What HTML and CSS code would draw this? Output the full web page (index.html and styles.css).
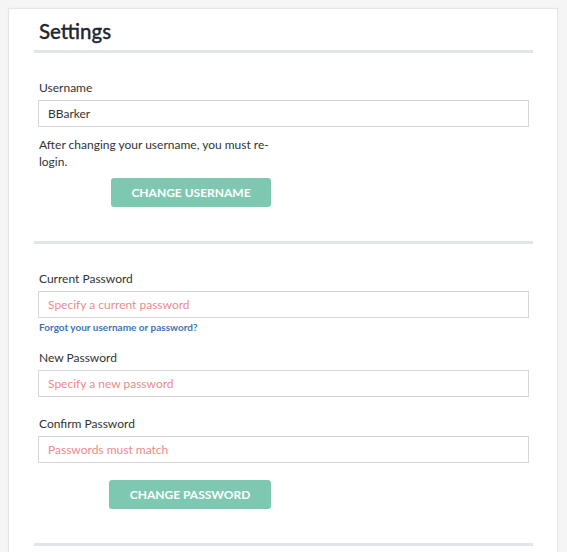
FILE: index.html
```html
<!DOCTYPE html>
<html lang="en">
<head>
<meta charset="utf-8">
<title>Settings</title>
<link rel="stylesheet" href="styles.css">
</head>
<body>
<div class="card">
  <h1 class="title">Settings</h1>
  <hr class="rule">
  <section class="section">
    <label class="label" for="username">Username</label>
    <input class="field" id="username" type="text" value="BBarker">
    <p class="help">After changing your username, you must re-login.</p>
    <button class="btn btn-username" type="button">Change Username</button>
  </section>
  <hr class="rule rule-gap">
  <section class="section">
    <label class="label" for="current">Current Password</label>
    <input class="field" id="current" type="password" placeholder="Specify a current password">
    <a class="forgot" href="#">Forgot your username or password?</a>
    <label class="label label-next" for="newpw">New Password</label>
    <input class="field" id="newpw" type="password" placeholder="Specify a new password">
    <label class="label label-far" for="confirm">Confirm Password</label>
    <input class="field" id="confirm" type="password" placeholder="Passwords must match">
    <button class="btn btn-password" type="button">Change Password</button>
  </section>
  <hr class="rule rule-gap">
</div>
</body>
</html>
```
FILE: styles.css
```css
html, body {
  margin: 0;
  padding: 0;
}
body {
  background: #f5f5f5;
  font-family: Lato, "Open Sans", "Liberation Sans", sans-serif;
  color: #333;
  height: 552px;
  overflow: hidden;
}
.card {
  margin: 8px 0 0 8px;
  width: 499px;
  padding: 9px 24px 40px 25px;
  background: #fff;
  border: 1px solid #e4e6e8;
  box-shadow: 0 0 2px rgba(0,0,0,0.04);
}
.title {
  margin: 0 0 6px 0;
  padding-left: 5px;
  font-size: 20.5px;
  line-height: 26px;
  font-weight: 500;
  color: #23262c;
  -webkit-text-stroke: 0.3px #23262c;
}
.rule {
  margin: 0;
  border: 0;
  height: 3px;
  background: #e1e5e9;
}
.rule-gap {
  margin-top: 34px;
}
.section {
  display: flex;
  flex-direction: column;
  align-items: flex-start;
  padding: 25px 4px 0 4px;
}
.label {
  display: block;
  padding: 2px 0 0 1px;
  font-size: 12px;
  line-height: 16px;
  color: #333;
}
.label-next {
  margin-top: 14px;
}
.label-far {
  margin-top: 17px;
}
.field {
  box-sizing: border-box;
  width: 491px;
  height: 27px;
  margin: 4px 0 0 0;
  padding: 0 9px;
  border: 1px solid #d6d6d6;
  border-radius: 0;
  background: #fff;
  font-family: Lato, "Open Sans", "Liberation Sans", sans-serif;
  font-size: 12px;
  color: #333;
  outline: none;
}
.field::placeholder {
  color: #f08a8a;
  opacity: 1;
}
.help {
  width: 245px;
  margin: 9px 0 0 0;
  padding-left: 1px;
  font-size: 12px;
  line-height: 17px;
  color: #333;
}
.btn {
  box-sizing: border-box;
  height: 29px;
  margin-top: 8px;
  border: 0;
  border-radius: 3px;
  background: #7ec8b2;
  color: #fff;
  font-family: Lato, "Open Sans", "Liberation Sans", sans-serif;
  font-size: 12px;
  font-weight: 700;
  text-transform: uppercase;
  cursor: pointer;
}
.btn-username {
  width: 160px;
  margin-left: 73px;
}
.btn-password {
  width: 162px;
  margin-top: 17px;
  margin-left: 71px;
}
.forgot {
  display: block;
  margin-top: 2px;
  padding-left: 1px;
  font-size: 10px;
  line-height: 14px;
  font-weight: 700;
  color: #3a76b6;
  text-decoration: none;
}
```
